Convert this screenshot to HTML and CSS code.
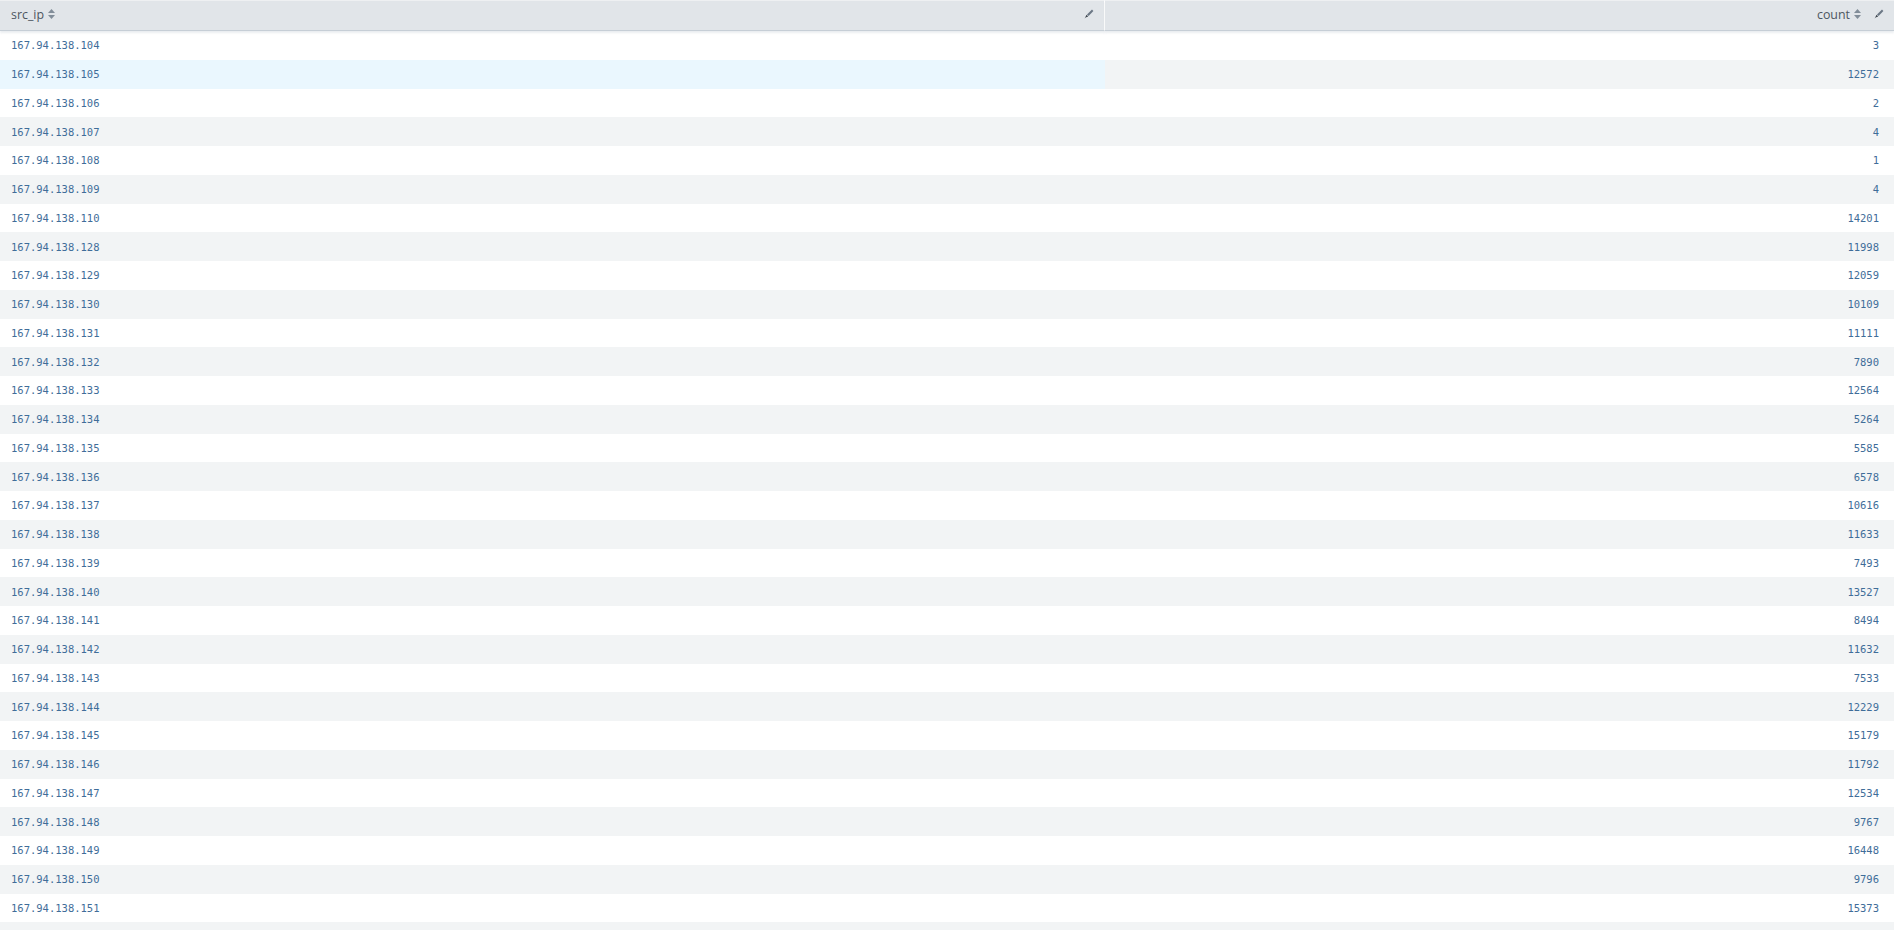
FILE: index.html
```html
<!DOCTYPE html>
<html lang="en">
<head>
<meta charset="utf-8">
<title>Results</title>
<link rel="stylesheet" href="styles.css">
</head>
<body>
<table class="results">
<colgroup><col class="col-ip"><col class="col-count"></colgroup>
<thead>
<tr>
<th class="head head-left"><span class="head-inner"><span class="head-label">src_ip</span><svg class="sort" viewBox="0 0 7 10" width="7" height="10"><path d="M3.5 0 7 4H0z"/><path d="M3.5 10 0 6h7z"/></svg><span class="spacer"></span><svg class="pencil" viewBox="0 0 10 10" width="10" height="10"><path class="pencil-body" d="M3 5.4 8 .6l1.4 1.4L4.6 7z"/><path class="pencil-tip" d="M2.6 5.8 4.2 7.4 1.6 8.4.6 9.4z"/></svg></span></th>
<th class="head head-right"><span class="head-inner"><span class="spacer"></span><span class="head-label">count</span><svg class="sort" viewBox="0 0 7 10" width="7" height="10"><path d="M3.5 0 7 4H0z"/><path d="M3.5 10 0 6h7z"/></svg><svg class="pencil pencil-gap" viewBox="0 0 10 10" width="10" height="10"><path class="pencil-body" d="M3 5.4 8 .6l1.4 1.4L4.6 7z"/><path class="pencil-tip" d="M2.6 5.8 4.2 7.4 1.6 8.4.6 9.4z"/></svg></span></th>
</tr>
</thead>
<tbody>
<tr><td class="ip">167.94.138.104</td><td class="num">3</td></tr>
<tr><td class="ip hover-cell">167.94.138.105</td><td class="num">12572</td></tr>
<tr><td class="ip">167.94.138.106</td><td class="num">2</td></tr>
<tr><td class="ip">167.94.138.107</td><td class="num">4</td></tr>
<tr><td class="ip">167.94.138.108</td><td class="num">1</td></tr>
<tr><td class="ip">167.94.138.109</td><td class="num">4</td></tr>
<tr><td class="ip">167.94.138.110</td><td class="num">14201</td></tr>
<tr><td class="ip">167.94.138.128</td><td class="num">11998</td></tr>
<tr><td class="ip">167.94.138.129</td><td class="num">12059</td></tr>
<tr><td class="ip">167.94.138.130</td><td class="num">10109</td></tr>
<tr><td class="ip">167.94.138.131</td><td class="num">11111</td></tr>
<tr><td class="ip">167.94.138.132</td><td class="num">7890</td></tr>
<tr><td class="ip">167.94.138.133</td><td class="num">12564</td></tr>
<tr><td class="ip">167.94.138.134</td><td class="num">5264</td></tr>
<tr><td class="ip">167.94.138.135</td><td class="num">5585</td></tr>
<tr><td class="ip">167.94.138.136</td><td class="num">6578</td></tr>
<tr><td class="ip">167.94.138.137</td><td class="num">10616</td></tr>
<tr><td class="ip">167.94.138.138</td><td class="num">11633</td></tr>
<tr><td class="ip">167.94.138.139</td><td class="num">7493</td></tr>
<tr><td class="ip">167.94.138.140</td><td class="num">13527</td></tr>
<tr><td class="ip">167.94.138.141</td><td class="num">8494</td></tr>
<tr><td class="ip">167.94.138.142</td><td class="num">11632</td></tr>
<tr><td class="ip">167.94.138.143</td><td class="num">7533</td></tr>
<tr><td class="ip">167.94.138.144</td><td class="num">12229</td></tr>
<tr><td class="ip">167.94.138.145</td><td class="num">15179</td></tr>
<tr><td class="ip">167.94.138.146</td><td class="num">11792</td></tr>
<tr><td class="ip">167.94.138.147</td><td class="num">12534</td></tr>
<tr><td class="ip">167.94.138.148</td><td class="num">9767</td></tr>
<tr><td class="ip">167.94.138.149</td><td class="num">16448</td></tr>
<tr><td class="ip">167.94.138.150</td><td class="num">9796</td></tr>
<tr><td class="ip">167.94.138.151</td><td class="num">15373</td></tr>
<tr><td class="ip"></td><td class="num"></td></tr>
</tbody>
</table>
</body>
</html>
```
FILE: styles.css
```css
html, body { margin: 0; padding: 0; height: 930px; overflow: hidden; background: #fff; }
.results { width: 1894px; border-collapse: separate; border-spacing: 0; table-layout: fixed; }
.col-ip { width: 1105px; }
.head { box-sizing: border-box; height: 31px; padding: 0; background: #e1e5e9; border-top: 1px solid #eef0f2; border-bottom: 1px solid #c6ced6; box-shadow: 0 2px 2px rgba(195,203,212,.35); font: 400 12.4px "Open Sans", sans-serif; color: #4d5661; text-align: left; }
.head-left { border-right: 1px solid #fff; }
.head-inner { display: flex; align-items: center; gap: 4px; padding: 0 10px 0 11px; height: 26px; margin-bottom: 3px; }
.spacer { flex: 1; }
.sort { fill: #818d99; }
.pencil-gap { margin-left: 9px; }
.pencil-body { fill: #6b7785; }
.pencil-tip { fill: #3c444d; }
td { height: 28.75px; box-sizing: border-box; padding: 0 11px; font: 400 10.5px "DejaVu Sans Mono", monospace; color: #3f6d99; line-height: 16px; }
.num { text-align: right; padding-right: 15px; }
tbody tr:nth-child(even) td { background: #f2f4f5; }
tbody tr:nth-child(even) td.hover-cell { background: #eaf7fe; }
```
